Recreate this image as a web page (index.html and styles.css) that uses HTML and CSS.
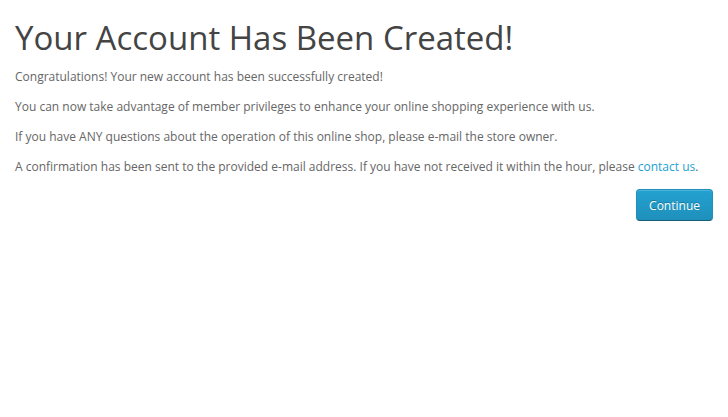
FILE: index.html
```html
<!DOCTYPE html>
<html lang="en">
<head>
<meta charset="utf-8">
<title>Your Account Has Been Created!</title>
<link rel="stylesheet" href="styles.css">
</head>
<body>
<div class="container">
  <div class="content">
    <h1 class="title">Your Account Has Been Created!</h1>
    <p>Congratulations! Your new account has been successfully created!</p>
    <p>You can now take advantage of member privileges to enhance your online shopping experience with us.</p>
    <p>If you have ANY questions about the operation of this online shop, please e-mail the store owner.</p>
    <p>A confirmation has been sent to the provided e-mail address. If you have not received it within the hour, please <a href="#" class="link">contact us</a>.</p>
    <div class="buttons">
      <a href="#" class="btn-primary">Continue</a>
    </div>
  </div>
</div>
</body>
</html>
```

FILE: styles.css
```css
html, body {
  margin: 0;
  padding: 0;
  background: #fff;
}
body {
  font-family: "Open Sans", sans-serif;
  font-size: 12px;
  line-height: 20px;
  color: #666;
}
.container {
  padding: 0 15px;
}
.title {
  font-size: 33px;
  font-weight: 400;
  line-height: 1.1;
  color: #444;
  margin: 20px 0 11px;
}
p {
  margin: 0 0 10px;
}
.link {
  color: #23a1d1;
  text-decoration: none;
}
.buttons {
  display: flex;
  justify-content: flex-end;
  margin: 12px 0 0;
}
.btn-primary {
  display: inline-block;
  padding: 6.5px 12px;
  font-size: 12px;
  line-height: 17px;
  color: #fff;
  text-decoration: none;
  text-shadow: 0 -1px 0 rgba(0,0,0,0.25);
  background-color: #229ac8;
  background-image: linear-gradient(to bottom, #23a1d1, #1f90bb);
  border: 1px solid;
  border-color: #1f90bb #1f90bb #145e7a;
  border-radius: 4px;
  box-shadow: inset 0 1px 0 rgba(255,255,255,0.2), 0 1px 2px rgba(0,0,0,0.05);
}
```
